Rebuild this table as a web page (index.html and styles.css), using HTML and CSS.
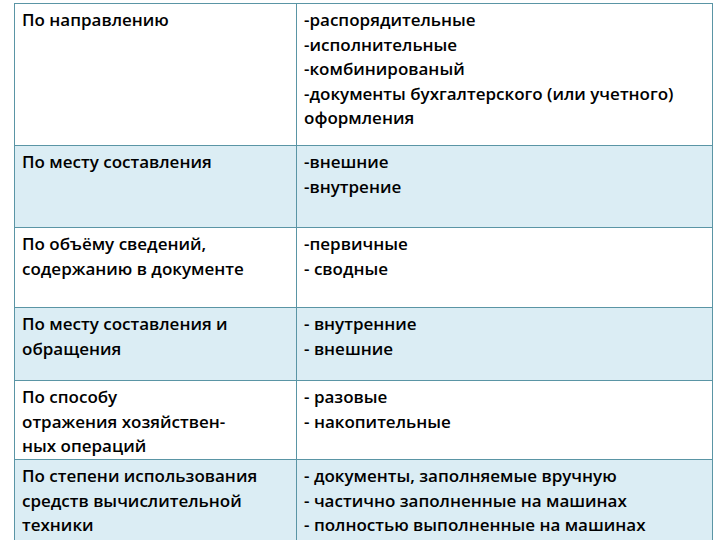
FILE: index.html
```html
<!DOCTYPE html>
<html lang="ru">
<head>
<meta charset="utf-8">
<title>Классификация документов</title>
<link rel="stylesheet" href="styles.css">
</head>
<body>
<table class="grid">
  <colgroup><col class="c1"><col class="c2"></colgroup>
  <tr class="r r1 light">
    <td>По направлению</td>
    <td>-распорядительные<br>-исполнительные<br>-комбинированый<br>-документы бухгалтерского (или учетного) оформления</td>
  </tr>
  <tr class="r r2 blue">
    <td>По месту составления</td>
    <td>-внешние<br>-внутрение</td>
  </tr>
  <tr class="r r3 light">
    <td>По объёму сведений, содержанию в документе</td>
    <td>-первичные<br>- сводные</td>
  </tr>
  <tr class="r r4 blue">
    <td>По месту составления и обращения</td>
    <td>- внутренние<br>- внешние</td>
  </tr>
  <tr class="r r5 light">
    <td>По способу<br>отражения хозяйствен-<br>ных операций</td>
    <td>- разовые<br>- накопительные</td>
  </tr>
  <tr class="r r6 blue">
    <td>По степени использования средств вычислительной техники</td>
    <td>- документы, заполняемые вручную<br>- частично заполненные на машинах<br>- полностью выполненные на машинах</td>
  </tr>
</table>
</body>
</html>
```
FILE: styles.css
```css
html, body {
  margin: 0;
  padding: 0;
  background: #ffffff;
}
body {
  padding: 3px 0 0 14px;
  font-family: "Open Sans", Lato, "Noto Sans", sans-serif;
  color: #000;
  overflow: hidden;
  height: 540px;
  box-sizing: border-box;
}
.grid {
  border-collapse: collapse;
  table-layout: fixed;
  width: 698px;
}
.c1 { width: 282px; }
.c2 { width: 416px; }
.grid td {
  border: 1px solid #5a95a5;
  vertical-align: top;
  padding: 4px 6px 0 7px;
  font-size: 17px;
  line-height: 24.5px;
  font-weight: 600;
}
.light td { background: #ffffff; }
.blue td { background: #dbedf4; }
.r1 { height: 142px; }
.r2 { height: 82px; }
.r3 { height: 80px; }
.r4 { height: 73px; }
.r5 { height: 79px; }
.r6 { height: 84px; }
```
